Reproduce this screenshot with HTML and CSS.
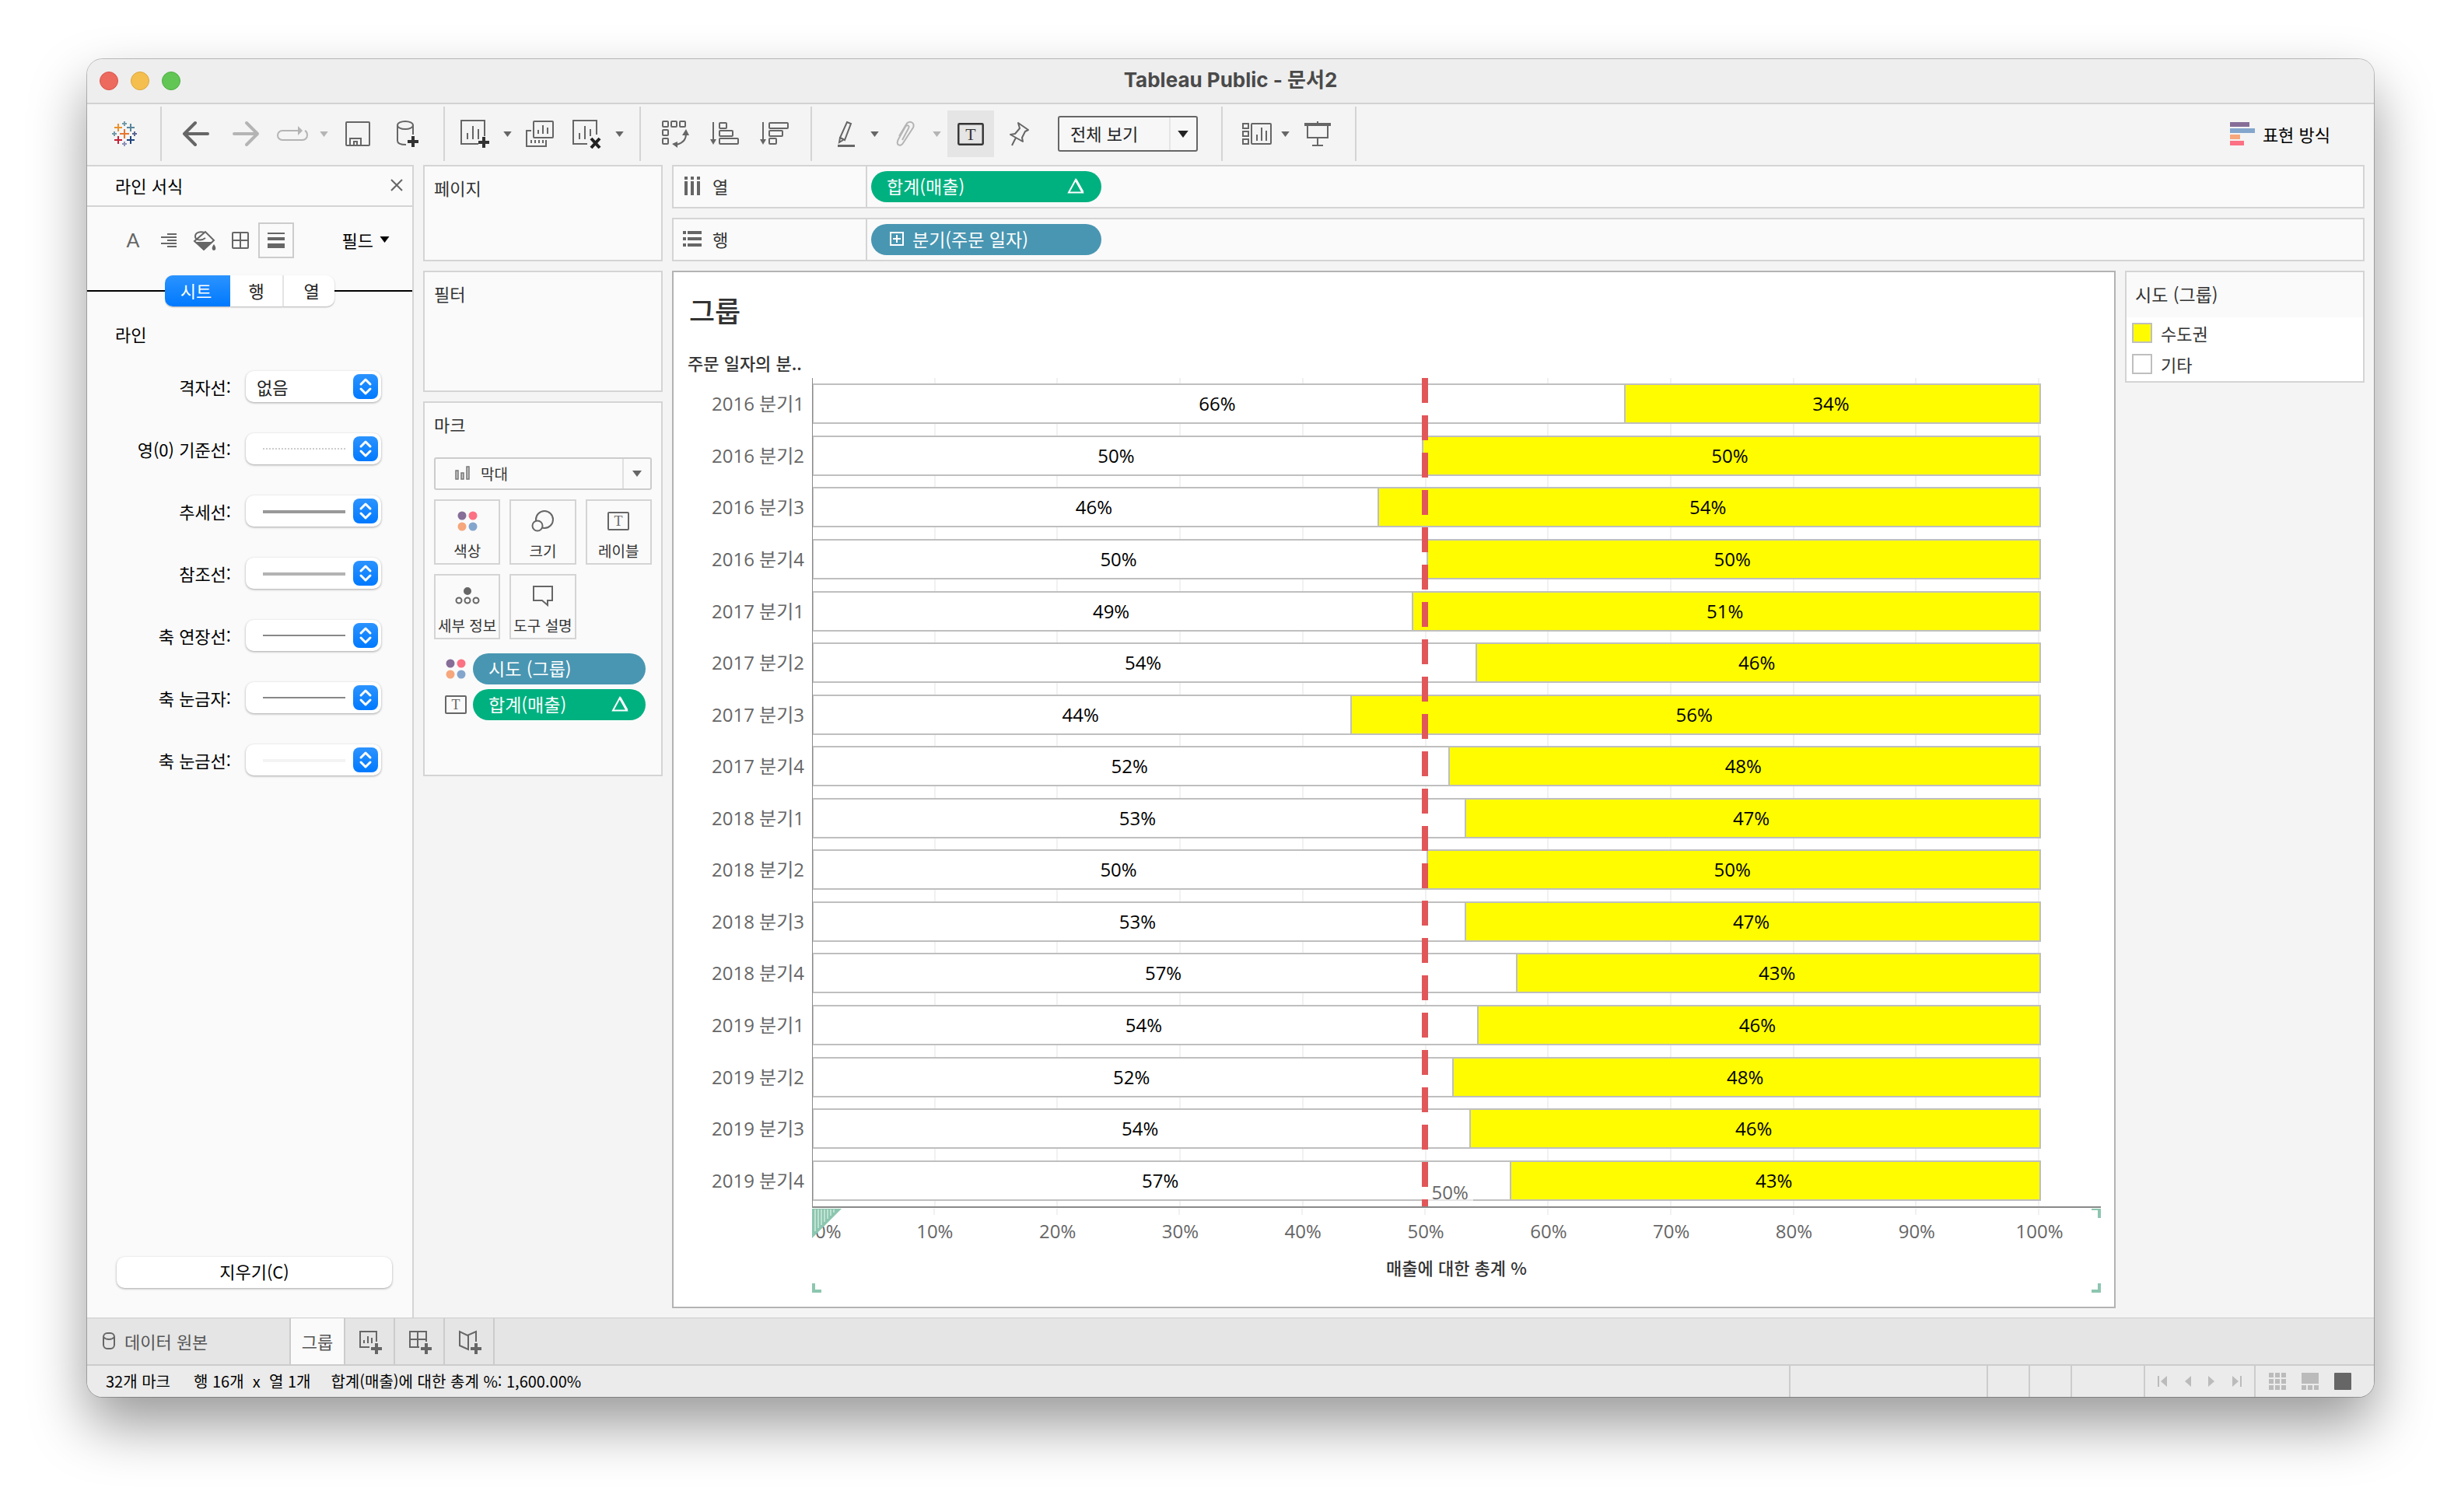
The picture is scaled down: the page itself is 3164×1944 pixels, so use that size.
FILE: index.html
```html
<!DOCTYPE html>
<html lang="ko">
<head>
<meta charset="utf-8">
<meta name="viewport" content="width=device-width, initial-scale=1">
<title>Tableau Public - 문서2</title>
<link rel="stylesheet" href="styles.css">
</head>
<body>
<svg class="sprite" aria-hidden="true">
  <symbol id="caret" viewBox="0 0 12 8"><path d="M0 0h12L6 8z" fill="currentColor"/></symbol>
  <symbol id="dots" viewBox="0 0 28 28"><circle cx="7" cy="7" r="5.5" fill="#866e98"/><circle cx="21" cy="7" r="5.5" fill="#fc7183"/><circle cx="7" cy="21" r="5.5" fill="#f6a77c"/><circle cx="21" cy="21" r="5.5" fill="#84a6cd"/></symbol>
  <symbol id="tbox" viewBox="0 0 28 24"><rect x="1" y="1" width="26" height="22" rx="1" fill="none" stroke="currentColor" stroke-width="2"/><text x="14" y="18" text-anchor="middle" font-family="Liberation Serif, serif" font-size="18" fill="currentColor">T</text></symbol>
  <symbol id="delta" viewBox="0 0 22 20"><path d="M2 18.500 11 2l9 16.500z" fill="none" stroke="#fff" stroke-width="2"/><path d="m11 2 9 16" stroke="#fff" stroke-width="3"/></symbol>
</svg>

<main class="window">
  <header class="titlebar">
    <div class="lights">
      <button class="light light--close" aria-label="닫기"></button>
      <button class="light light--min" aria-label="최소화"></button>
      <button class="light light--max" aria-label="확대"></button>
    </div>
    <h1 class="window-title">Tableau Public - 문서2</h1>
  </header>

  <nav class="toolbar">
    <div class="group group--logo">
      <button class="tool" aria-label="시작 페이지"><svg width="34" height="34" viewBox="0 0 34 34" fill="none" stroke-width="2">
        <path d="M17 11v12M11 17h12" stroke="#e8762d"/><path d="M9 4v10M4 9h10" stroke="#eb912b"/><path d="M25 4v10M20 9h10" stroke="#59879b"/><path d="M9 20v10M4 25h10" stroke="#c72037"/><path d="M25 20v10M20 25h10" stroke="#1f447d"/><path d="M17 1v6M14 4h6" stroke="#7199a6"/><path d="M17 27v6M14 30h6" stroke="#8d92b9"/><path d="M4 14v6M1 17h6" stroke="#7199a6"/><path d="M30 14v6M27 17h6" stroke="#5c6692"/></svg></button>
    </div>
    <div class="group group--file">
      <button class="tool" aria-label="실행 취소"><svg width="36" height="34" viewBox="0 0 36 34" fill="none" stroke="#666" stroke-width="4" stroke-linecap="round" stroke-linejoin="round"><path d="M33 17H3M17 3 3 17l14 14"/></svg></button>
      <button class="tool" aria-label="다시 실행"><svg width="36" height="34" viewBox="0 0 36 34" fill="none" stroke="#b4b4b4" stroke-width="4" stroke-linecap="round" stroke-linejoin="round"><path d="M3 17h30M19 3l14 14-14 14"/></svg></button>
      <button class="tool tool--56" aria-label="반복"><svg width="42" height="24" viewBox="0 0 42 24" fill="none" stroke="#b4b4b4" stroke-width="2"><path d="M28 8H8a6 6 0 0 0-6 6v0a6 6 0 0 0 6 6h26a6 6 0 0 0 6-6c0-3-1-5-3-6"/><path d="m28 2 6 6-6 6z" fill="#b4b4b4" stroke="none"/></svg></button>
      <button class="caret caret--off" aria-label="반복 메뉴"><svg width="11" height="7"><use href="#caret"/></svg></button>
      <button class="tool" aria-label="저장"><svg width="34" height="34" viewBox="0 0 34 34" fill="none" stroke="#666" stroke-width="2"><rect x="2" y="2" width="30" height="30" rx="1"/><path d="M7 32v-9h14v9M12 32v-5h4v5"/></svg></button>
      <button class="tool" aria-label="새 데이터 원본"><svg width="30" height="36" viewBox="0 0 30 36" fill="none" stroke="#666" stroke-width="2"><ellipse cx="12" cy="7" rx="10" ry="5"/><path d="M2 7v20c0 3 4 5 11 5M22 7v12"/><path d="M22 21v14M15 28h14" stroke="#333" stroke-width="4"/></svg></button>
    </div>
    <div class="group group--sheet">
      <button class="tool tool--60" aria-label="새 워크시트"><svg width="38" height="38" viewBox="0 0 38 38" fill="none" stroke="#666" stroke-width="2"><path d="M32 22V2H2v30h22M10 26v-8M17 26V9M24 26V13"/><path d="M31 23v14M24 30h14" stroke="#333" stroke-width="4"/></svg></button>
      <button class="caret" aria-label="새 워크시트 메뉴"><svg width="11" height="7"><use href="#caret"/></svg></button>
      <button class="tool tool--60" aria-label="복제"><svg width="38" height="38" viewBox="0 0 38 38" fill="none" stroke="#666" stroke-width="2"><rect x="11" y="3" width="25" height="21" rx="1"/><path d="M17 19v-5M23 19V8M29 19v-8M8 15H2v20h25v-8M8 31v-4M13 31v-4M18 31v-4M23 31v-4"/></svg></button>
      <button class="tool tool--60" aria-label="시트 지우기"><svg width="38" height="38" viewBox="0 0 38 38" fill="none" stroke="#666" stroke-width="2"><path d="M32 20V2H2v30h18M10 26v-8M17 26V9M24 22V13"/><path d="m25 25 11 12M36 25 25 37" stroke="#222" stroke-width="4"/></svg></button>
      <button class="caret" aria-label="지우기 메뉴"><svg width="11" height="7"><use href="#caret"/></svg></button>
    </div>
    <div class="group group--sort">
      <button class="tool" aria-label="행과 열 바꾸기"><svg width="36" height="36" viewBox="0 0 36 36" fill="none" stroke="#666" stroke-width="2"><rect x="2" y="2" width="7" height="7" rx="1"/><rect x="13" y="2" width="7" height="7" rx="1"/><rect x="24" y="2" width="7" height="7" rx="1"/><rect x="2" y="13" width="7" height="7" rx="1"/><rect x="2" y="24" width="7" height="7" rx="1"/><path d="M32 18c0 7-4 12-12 14"/><path d="m27 20 5-8 4 8zM21 28v8l-7-5z" fill="#666" stroke="none"/></svg></button>
      <button class="tool" aria-label="오름차순 정렬"><svg width="38" height="34" viewBox="0 0 38 34" fill="none" stroke="#666" stroke-width="2"><path d="M4 2v26"/><path d="M0 24h8l-4 7z" fill="#666" stroke="none"/><rect x="12" y="3" width="9" height="7" rx="1"/><rect x="12" y="13" width="17" height="7" rx="1"/><rect x="12" y="23" width="24" height="7" rx="1"/></svg></button>
      <button class="tool" aria-label="내림차순 정렬"><svg width="38" height="34" viewBox="0 0 38 34" fill="none" stroke="#666" stroke-width="2"><path d="M4 2v26"/><path d="M0 24h8l-4 7z" fill="#666" stroke="none"/><rect x="12" y="3" width="24" height="7" rx="1"/><rect x="12" y="13" width="17" height="7" rx="1"/><rect x="12" y="23" width="9" height="7" rx="1"/></svg></button>
    </div>
    <div class="group group--view">
      <button class="tool tool--52" aria-label="하이라이트"><svg width="26" height="36" viewBox="0 0 26 36" fill="none" stroke="#666" stroke-width="2"><path d="m14 3 5 2-8 21-6-3zM5 23l-1 6 5-3"/><path d="M2 33.500h22" stroke-width="3"/></svg></button>
      <button class="caret caret--tight" aria-label="하이라이트 메뉴"><svg width="11" height="7"><use href="#caret"/></svg></button>
      <button class="tool tool--60" aria-label="멤버 그룹화"><svg width="26" height="34" viewBox="0 0 26 34" fill="none" stroke="#b4b4b4" stroke-width="2"><path d="m9 25 8-15c2-4-2-5-4-2L4 24c-4 8 3 10 6 5L23 9c3-7-6-10-9-4L5 20"/></svg></button>
      <button class="caret caret--tight caret--off" aria-label="그룹 메뉴"><svg width="11" height="7"><use href="#caret"/></svg></button>
      <button class="tool tool--60 tool--on" aria-label="마크 레이블 표시" aria-pressed="true"><svg width="34" height="29"><use href="#tbox"/></svg></button>
      <button class="tool" aria-label="축 고정"><svg width="28" height="34" viewBox="0 0 28 34" fill="none" stroke="#666" stroke-width="2" stroke-linejoin="round"><path d="m13 3 13 9-4 2-4 8 1 5-16-9 6-1 6-7zM10 22 5 32"/></svg></button>
      <div class="fit">
        <select class="fit-select" aria-label="맞춤"><option>전체 보기</option></select>
        <svg class="fit-caret" width="14" height="9"><use href="#caret"/></svg>
      </div>
    </div>
    <div class="group group--cards">
      <button class="tool tool--52" aria-label="카드 표시"><svg width="40" height="32" viewBox="0 0 40 32" fill="none" stroke="#666" stroke-width="2"><rect x="2" y="3" width="7" height="6"/><rect x="2" y="13" width="7" height="6"/><rect x="2" y="23" width="7" height="6"/><rect x="13" y="3" width="25" height="26" rx="1"/><path d="M20 25v-8M26 25V8M32 25V12"/></svg></button>
      <button class="caret caret--tight" aria-label="카드 메뉴"><svg width="11" height="7"><use href="#caret"/></svg></button>
      <button class="tool" aria-label="프레젠테이션 모드"><svg width="36" height="34" viewBox="0 0 36 34" fill="none" stroke="#666" stroke-width="2"><path d="M18 1v4M5 6v16h26V6M18 22v9M11 32h14"/><path d="M1 5h34" stroke-width="4"/></svg></button>
    </div>
    <button class="show-me"><svg width="32" height="30" viewBox="0 0 32 30"><path d="M0 0h25v6H0z" fill="#866e98"/><path d="M0 8h32v6H0z" fill="#84a6cd"/><path d="M0 16h13v6H0z" fill="#f6a77c"/><path d="M0 24h18v6H0z" fill="#fc7183"/></svg>표현 방식</button>
  </nav>

  <div class="workspace">
    <aside class="format">
      <header class="format-head"><h2>라인 서식</h2><button class="close" aria-label="닫기"><svg width="16" height="16" viewBox="0 0 16 16" stroke="#666" stroke-width="2"><path d="m1 1 14 14M15 1 1 15"/></svg></button></header>
      <div class="format-tools">
        <button class="ftool" aria-label="글꼴"><svg width="30" height="36"><text x="15" y="27" text-anchor="middle" font-family="Lato, sans-serif" font-size="25" fill="#666">A</text></svg></button>
        <button class="ftool" aria-label="맞춤"><svg width="22" height="20" viewBox="0 0 22 20" stroke="#666" stroke-width="2"><path d="M9 2h12M1 6h20M9 10h12M1 14h20M9 18h12"/></svg></button>
        <button class="ftool" aria-label="음영"><svg width="30" height="28" viewBox="0 0 30 28" fill="none" stroke="#666" stroke-width="2"><path d="m2 15 14-12 11 11-13 12zM16 11c-5 4-13 3-13-2s6-7 12-5"/><path d="M3 16h23L14 27zM27 19c4 5 2 8 0 8s-4-3 0-8z" fill="#666" stroke="none"/></svg></button>
        <button class="ftool" aria-label="테두리"><svg width="24" height="24" viewBox="0 0 24 24" fill="none" stroke="#666" stroke-width="2"><rect x="2" y="2" width="20" height="20" rx="1"/><path d="M12 2v20M2 12h20"/></svg></button>
        <button class="ftool ftool--on" aria-label="라인"><svg width="22" height="22" viewBox="0 0 22 22" fill="#666"><path d="M0 1h22v2H0zM0 7h22v4H0zM0 15h22v6H0z"/></svg></button>
        <button class="fields">필드<svg width="13" height="8"><use href="#caret"/></svg></button>
      </div>
      <div class="scope">
        <div class="segments" role="radiogroup" aria-label="범위">
          <input type="radio" name="scope" id="s1" checked><label for="s1" class="segment segment--wide">시트</label>
          <input type="radio" name="scope" id="s2"><label for="s2" class="segment">행</label>
          <input type="radio" name="scope" id="s3"><label for="s3" class="segment">열</label>
        </div>
      </div>
      <h3 class="format-section">라인</h3>
      <form class="lines">
        <label for="l1">격자선:</label><select id="l1"><option>없음</option></select>
        <label for="l2">영(0) 기준선:</label><select id="l2" class="line line--dotted"><option aria-label="점선"></option></select>
        <label for="l3">추세선:</label><select id="l3" class="line line--trend"><option aria-label="실선"></option></select>
        <label for="l4">참조선:</label><select id="l4" class="line line--ref"><option aria-label="실선"></option></select>
        <label for="l5">축 연장선:</label><select id="l5" class="line line--thin"><option aria-label="실선"></option></select>
        <label for="l6">축 눈금자:</label><select id="l6" class="line line--thin"><option aria-label="실선"></option></select>
        <label for="l7">축 눈금선:</label><select id="l7" class="line line--faint"><option aria-label="실선"></option></select>
      </form>
      <button class="clear">지우기(C)</button>
    </aside>

    <section class="cards">
      <div class="card card--pages"><h2>페이지</h2></div>
      <div class="card card--filters"><h2>필터</h2></div>
      <div class="card card--marks">
        <h2>마크</h2>
        <div class="mark-type">
          <svg class="mark-bars" width="19" height="18" viewBox="0 0 19 18" fill="#ccc" stroke="#777" stroke-width="1.500"><rect x="1" y="6" width="3" height="11"/><rect x="8" y="9" width="3" height="8"/><rect x="15" y="1" width="3" height="16"/></svg>
          <select class="mark-select" aria-label="마크 유형"><option>막대</option></select>
          <svg class="mark-caret" width="14" height="8"><use href="#caret"/></svg>
        </div>
        <div class="mark-buttons">
          <button><svg width="28" height="28"><use href="#dots"/></svg>색상</button>
          <button><svg width="30" height="28" viewBox="0 0 30 28" fill="none" stroke="#666" stroke-width="2"><circle cx="17" cy="12" r="11"/><circle cx="8" cy="20" r="6.500" fill="#fafafa"/></svg>크기</button>
          <button><svg width="28" height="24"><use href="#tbox"/></svg>레이블</button>
          <button><svg width="32" height="22" viewBox="0 0 32 22" fill="none" stroke="#666" stroke-width="2"><circle cx="16" cy="5" r="4" fill="#666"/><circle cx="5" cy="17" r="3.500"/><circle cx="16" cy="17" r="3.500"/><circle cx="27" cy="17" r="3.500"/></svg>세부 정보</button>
          <button><svg width="28" height="28" viewBox="0 0 28 28" fill="none" stroke="#666" stroke-width="2"><path d="M2 2h24v18h-6v6l-7-6H2z"/></svg>도구 설명</button>
        </div>
        <ul class="mark-pills">
          <li><svg width="28" height="28"><use href="#dots"/></svg><button class="pill pill--blue">시도 (그룹)</button></li>
          <li><svg width="28" height="24"><use href="#tbox"/></svg><button class="pill pill--green">합계(매출)<svg width="22" height="20"><use href="#delta"/></svg></button></li>
        </ul>
      </div>
    </section>

    <section class="sheet">
      <div class="shelf">
        <h2><svg width="24" height="26" viewBox="0 0 24 26" fill="#666"><path d="M2 1h4v4H2zM10 1h4v4h-4zM18 1h4v4h-4zM2 7h4v18H2zM10 7h4v18h-4zM18 7h4v18h-4z"/></svg>열</h2>
        <div class="shelf-drop"><button class="pill pill--green">합계(매출)<svg width="22" height="20"><use href="#delta"/></svg></button></div>
      </div>
      <div class="shelf">
        <h2><svg width="24" height="20" viewBox="0 0 24 20" fill="#666"><path d="M0 0h4v4H0zM0 8h4v4H0zM0 16h4v4H0zM6 0h18v4H6zM6 8h18v4H6zM6 16h18v4H6z"/></svg>행</h2>
        <div class="shelf-drop"><button class="pill pill--blue"><svg class="expand" width="20" height="20" viewBox="0 0 20 20" fill="none" stroke="#fff" stroke-width="2"><rect x="2" y="2" width="16" height="16"/><path d="M10 5v10M5 10h10"/></svg>분기(주문 일자)</button></div>
      </div>

      <div class="stage">
        <article class="viz">
          <h2 class="viz-title">그룹</h2>
          <div class="row-header">주문 일자의 분..</div>
          <ol class="row-labels">
            <li>2016 분기1</li><li>2016 분기2</li><li>2016 분기3</li><li>2016 분기4</li>
            <li>2017 분기1</li><li>2017 분기2</li><li>2017 분기3</li><li>2017 분기4</li>
            <li>2018 분기1</li><li>2018 분기2</li><li>2018 분기3</li><li>2018 분기4</li>
            <li>2019 분기1</li><li>2019 분기2</li><li>2019 분기3</li><li>2019 분기4</li>
          </ol>
          <div class="plot">
            <div class="gridlines"><i></i><i></i><i></i><i></i><i></i><i></i><i></i><i></i><i></i><i></i></div>
            <div class="bar"><span style="width:66.1%">66%</span><b>34%</b></div>
            <div class="bar"><span style="width:49.6%">50%</span><b>50%</b></div>
            <div class="bar"><span style="width:46%">46%</span><b>54%</b></div>
            <div class="bar"><span style="width:50%">50%</span><b>50%</b></div>
            <div class="bar"><span style="width:48.8%">49%</span><b>51%</b></div>
            <div class="bar"><span style="width:54%">54%</span><b>46%</b></div>
            <div class="bar"><span style="width:43.8%">44%</span><b>56%</b></div>
            <div class="bar"><span style="width:51.8%">52%</span><b>48%</b></div>
            <div class="bar"><span style="width:53.1%">53%</span><b>47%</b></div>
            <div class="bar"><span style="width:50%">50%</span><b>50%</b></div>
            <div class="bar"><span style="width:53.1%">53%</span><b>47%</b></div>
            <div class="bar"><span style="width:57.3%">57%</span><b>43%</b></div>
            <div class="bar"><span style="width:54.1%">54%</span><b>46%</b></div>
            <div class="bar"><span style="width:52.1%">52%</span><b>48%</b></div>
            <div class="bar"><span style="width:53.5%">54%</span><b>46%</b></div>
            <div class="bar"><span style="width:56.8%">57%</span><b>43%</b></div>
            <div class="ref-line"></div>
            <div class="ref-label">50%</div>
          </div>
          <div class="axis">
            <div class="ticks"><i></i><i></i><i></i><i></i><i></i><i></i><i></i><i></i><i></i><i></i></div>
            <ol class="axis-labels"><li>0%</li><li>10%</li><li>20%</li><li>30%</li><li>40%</li><li>50%</li><li>60%</li><li>70%</li><li>80%</li><li>90%</li><li>100%</li></ol>
            <div class="axis-title">매출에 대한 총계 %</div>
            <svg class="grip" width="38" height="38" viewBox="0 0 38 38"><path d="M0 0h38L0 38z" fill="#8dc6b0"/><path d="M4 1v28M8 1v24M12 1v20M16 1v16M20 1v12M24 1v8M28 1v4" stroke="#bfe3d3" stroke-width="2"/></svg>
            <span class="corner corner--tr"></span><span class="corner corner--bl"></span><span class="corner corner--br"></span>
          </div>
        </article>
        <aside class="legend">
          <h2>시도 (그룹)</h2>
          <ul><li><span class="swatch swatch--yellow"></span>수도권</li><li><span class="swatch"></span>기타</li></ul>
        </aside>
      </div>
    </section>
  </div>

  <nav class="tabs">
    <button class="tab tab--source"><svg width="18" height="24" viewBox="0 0 18 24" fill="none" stroke="#666" stroke-width="2"><rect x="2" y="2" width="14" height="20" rx="5"/><path d="M2 7c3 4 11 4 14 0"/></svg>데이터 원본</button>
    <button class="tab tab--active">그룹</button>
    <button class="tab tab--new" aria-label="새 워크시트"><svg width="32" height="32" viewBox="0 0 32 32" fill="none" stroke="#666" stroke-width="2"><path d="M23 15V2H2v20h12M7 17v-4M12 17V8M17 17v-7"/><path d="M23 17v14M16 24h14" stroke-width="4"/></svg></button>
    <button class="tab tab--new" aria-label="새 대시보드"><svg width="32" height="32" viewBox="0 0 32 32" fill="none" stroke="#666" stroke-width="2"><path d="M23 15V2H2v20h12M12 2v20M2 12h21"/><path d="M23 17v14M16 24h14" stroke-width="4"/></svg></button>
    <button class="tab tab--new" aria-label="새 스토리"><svg width="32" height="32" viewBox="0 0 32 32" fill="none" stroke="#666" stroke-width="2"><path d="M23 15V2L12 7 2 2v18l11 5V7"/><path d="M23 17v14M16 24h14" stroke-width="4"/></svg></button>
  </nav>

  <footer class="status">
    <span class="status-marks">32개 마크</span><span class="status-size">행 16개&nbsp; x&nbsp; 열 1개</span><span class="status-sum">합계(매출)에 대한 총계 %: 1,600.00%</span>
    <span class="cell cell--254"></span><span class="cell cell--54"></span><span class="cell cell--54"></span><span class="cell cell--94"></span>
    <div class="cell pager">
      <button aria-label="처음"><svg width="12" height="14" viewBox="0 0 12 14"><path d="M0 0h2v14H0zM12 0v14L4 7z"/></svg></button>
      <button aria-label="이전"><svg width="8" height="14" viewBox="0 0 8 14"><path d="M8 0v14L0 7z"/></svg></button>
      <button aria-label="다음"><svg width="8" height="14" viewBox="0 0 8 14"><path d="M0 0v14l8-7z"/></svg></button>
      <button aria-label="마지막"><svg width="12" height="14" viewBox="0 0 12 14"><path d="M10 0h2v14h-2zM0 0v14l8-7z"/></svg></button>
    </div>
    <div class="cell modes">
      <button aria-label="시트 정렬기"><svg width="22" height="22" viewBox="0 0 22 22"><path d="M0 0h6v6H0zM8 0h6v6H8zM16 0h6v6h-6zM0 8h6v6H0zM8 8h6v6H8zM16 8h6v6h-6zM0 16h6v6H0zM8 16h6v6H8zM16 16h6v6h-6z"/></svg></button>
      <button aria-label="필름스트립"><svg width="22" height="22" viewBox="0 0 22 22"><path d="M0 0h22v14H0zM0 16h6v6H0zM8 16h6v6H8zM16 16h6v6h-6z"/></svg></button>
      <button class="mode--on" aria-label="탭"><svg width="22" height="22" viewBox="0 0 22 22"><rect width="22" height="22" rx="1"/></svg></button>
    </div>
  </footer>
</main>
</body>
</html>
```
FILE: styles.css
```css
* { box-sizing: border-box; }

body {
  margin: 0;
  min-height: 100vh;
  display: flex;
  padding: 76px 112px 148px;
  background: #fff;
  color: #333;
  font: 22px/32px "Noto Sans CJK KR", sans-serif;
}

h1, h2, h3, ol, ul { margin: 0; padding: 0; font: inherit; list-style: none; }
button, select { margin: 0; padding: 0; border: 0; background: none; color: inherit; font: inherit; }
select { appearance: none; }
svg { display: block; flex: none; }
.sprite { display: none; }

.window {
  flex: 1;
  min-width: 0;
  display: flex;
  flex-direction: column;
  overflow: hidden;
  border-radius: 20px;
  background: #f4f4f4;
  box-shadow: 0 0 0 1px rgba(0, 0, 0, .24), 0 36px 72px rgba(0, 0, 0, .4);
}

/* title bar */
.titlebar {
  display: grid;
  grid-template-columns: 1fr auto 1fr;
  align-items: center;
  height: 58px;
  padding: 0 16px;
  border-bottom: 2px solid #d2d2d2;
  background: #eee;
}
.lights { display: flex; gap: 16px; }
.light { width: 24px; height: 24px; border-radius: 50%; border: 1px solid; }
.light--close { background: #ed6a5f; border-color: #d95549; }
.light--min { background: #f5bf4f; border-color: #dba53a; }
.light--max { background: #62c655; border-color: #4dae40; }
.window-title { padding-bottom: 2px; font-family: Inter, "Noto Sans CJK KR", sans-serif; font-size: 26px; font-weight: 700; color: #4a4a4a; }

/* toolbar */
.toolbar { display: flex; align-items: center; height: 78px; padding: 0 56px 2px 0; }
.group { display: flex; align-items: center; height: 70px; border-right: 2px solid #d4d4d4; }
.group--logo { padding: 0 14px 0 16px; }
.group--file { padding: 0 14px 0 12px; }
.group--sheet { padding: 0 14px 0 8px; }
.group--sort { padding: 0 14px 0 12px; }
.group--view { padding: 0 30px 0 18px; }
.group--cards { padding: 0 16px 0 18px; }
.tool, .caret { display: flex; align-items: center; justify-content: center; width: 64px; height: 60px; color: #333; }
.tool--52 { width: 52px; }
.tool--56 { width: 56px; }
.tool--60 { width: 60px; }
.tool--on { margin-left: 4px; background: #e5e5e5; }
.caret { width: 24px; color: #666; }
.caret--tight { width: 20px; }
.caret--off { color: #b4b4b4; }
.fit { position: relative; margin-left: 18px; color: #222; }
.fit-select { display: block; width: 180px; height: 46px; padding: 0 0 2px 14px; border: 2px solid #666; border-radius: 3px; background: linear-gradient(#e5e5e5, #e5e5e5) 141px 0 / 2px 100% no-repeat #f7f7f7; }
.fit-caret { position: absolute; right: 12px; top: 19px; pointer-events: none; }
.show-me { display: flex; align-items: center; gap: 10px; margin-left: auto; color: #000; }

/* workspace */
.workspace { flex: 1; display: flex; gap: 12px; padding-right: 12px; }

/* format pane */
.format {
  flex: none;
  width: 420px;
  display: flex;
  flex-direction: column;
  border: solid #d4d4d4;
  border-width: 2px 2px 0 0;
  background: #fafafa;
  color: #000;
}
.format-head { display: flex; align-items: center; justify-content: space-between; height: 52px; padding: 0 12px 2px 36px; border-bottom: 2px solid #d4d4d4; }
.format-tools { display: flex; align-items: center; height: 86px; padding: 0 29px 0 36px; }
.ftool { display: flex; align-items: center; justify-content: center; width: 46px; height: 46px; }
.ftool--on { border: 2px solid #ccc; }
.fields { display: flex; align-items: center; gap: 8px; margin-left: auto; padding-bottom: 2px; }
.scope { display: flex; align-items: center; }
.scope::before, .scope::after { content: ""; flex: 1; height: 2px; background: #000; }
.segments { display: flex; height: 44px; padding: 2px 0; }
.segments input { position: absolute; opacity: 0; pointer-events: none; }
.segment { width: 67px; text-align: center; line-height: 38px; background: #fff; color: #222; box-shadow: 0 1px 2px rgba(0, 0, 0, .3); clip-path: inset(-2px 0 -4px 0); }
.segment--wide { width: 84px; padding-right: 4px; border-radius: 10px 0 0 10px; }
.segment:last-child { padding-left: 6px; border-left: 2px solid #e4e4e4; border-radius: 0 10px 10px 0; clip-path: none; }
input:checked + .segment { background: linear-gradient(#2b93ff, #0079ff); color: #fff; }
.format-section { margin-top: 11px; padding: 4px 36px; line-height: 36px; }
.lines { display: grid; grid-template-columns: 185px 174px; column-gap: 19px; row-gap: 40px; margin-top: 26px; }
.lines label { text-align: right; line-height: 40px; }
.lines select {
  height: 40px;
  padding-left: 14px;
  border-radius: 10px;
  color: #222;
  box-shadow: 0 1px 3px rgba(0, 0, 0, .35);
  background-color: #fff;
  background-image: url("data:image/svg+xml,%3Csvg xmlns='http://www.w3.org/2000/svg' width='32' height='32'%3E%3ClinearGradient id='g' x2='0' y2='1'%3E%3Cstop stop-color='%232b93ff'/%3E%3Cstop offset='1' stop-color='%230079ff'/%3E%3C/linearGradient%3E%3Crect width='32' height='32' rx='8' fill='url(%23g)'/%3E%3Cpath d='m10 13 6-6 6 6M10 19l6 6 6-6' fill='none' stroke='white' stroke-width='3' stroke-linecap='round' stroke-linejoin='round'/%3E%3C/svg%3E"), var(--stroke, none);
  background-position: 138px 4px, 22px 19px;
  background-size: 32px 32px, 106px var(--weight, 4px);
  background-repeat: no-repeat;
}
.line--dotted { --stroke: repeating-linear-gradient(90deg, #ccc 0 2px, #fff 2px 4px); --weight: 2px; }
.line--trend { --stroke: linear-gradient(#999, #999); }
.line--ref { --stroke: linear-gradient(#b3b3b3, #b3b3b3); }
.line--thin { --stroke: linear-gradient(#888, #888); --weight: 2px; }
.line--faint { --stroke: linear-gradient(#f3f3f3, #f3f3f3); }
.clear { height: 40px; margin: auto 26px 38px 38px; padding-bottom: 4px; border-radius: 10px; background: #fff; box-shadow: 0 1px 3px rgba(0, 0, 0, .35); }

/* shelf cards */
.cards { flex: none; width: 308px; display: flex; flex-direction: column; gap: 12px; }
.card { padding: 10px 12px 12px; border: 2px solid #d4d4d4; background: #fafafa; }
.card h2 { line-height: 34px; }
.card--pages { height: 124px; }
.card--filters { height: 156px; }
.card--marks { padding-bottom: 70px; }
.mark-type { position: relative; margin: 26px 0 12px; font-size: 19px; }
.mark-select { display: block; width: 100%; height: 42px; padding-left: 58px; border: 2px solid #ccc; border-radius: 3px; background: linear-gradient(#e0e0e0, #e0e0e0) right 34px top 0 / 2px 100% no-repeat; }
.mark-bars { position: absolute; left: 27px; top: 11px; pointer-events: none; }
.mark-caret { position: absolute; right: 12px; top: 17px; color: #666; pointer-events: none; }
.mark-buttons { display: grid; grid-template-columns: repeat(3, 1fr); gap: 12px; font-size: 19px; }
.mark-buttons button { display: grid; grid-template-rows: 52px 24px; align-content: start; place-items: center; height: 84px; border: 2px solid #d4d4d4; line-height: 20px; white-space: nowrap; color: #333; }
.mark-buttons svg { color: #666; }
.mark-pills { display: grid; gap: 6px; padding: 18px 8px 0 14px; color: #666; }
.mark-pills li { display: flex; align-items: center; gap: 8px; }
.pill { display: flex; align-items: center; justify-content: space-between; flex: 1; height: 40px; padding: 0 22px 2px 20px; border-radius: 20px; color: #fff; font-size: 23px; line-height: 32px; white-space: nowrap; }
.pill--blue { background: #4996b2; }
.pill--green { background: #00b180; }

/* column and row shelves */
.sheet { flex: 1; min-width: 0; display: flex; flex-direction: column; gap: 12px; padding-bottom: 12px; }
.shelf { display: flex; height: 56px; border: 2px solid #d4d4d4; background: #fafafa; }
.shelf h2 { display: flex; align-items: center; gap: 14px; width: 249px; padding: 0 0 2px 12px; border-right: 2px solid #d4d4d4; }
.shelf-drop { display: flex; align-items: center; padding-left: 5px; }
.shelf .pill { flex: none; width: 296px; }
.shelf .pill--blue { justify-content: flex-start; gap: 10px; padding-left: 23px; }

/* view */
.stage { flex: 1; display: flex; align-items: flex-start; gap: 12px; }
.viz {
  flex: 1;
  align-self: stretch;
  min-width: 0;
  display: grid;
  grid-template-columns: 178px 1fr;
  grid-template-rows: 96px 40px 1fr 129px;
  padding-right: 17px;
  border: 2px solid #b3b3b3;
  background: #fff;
}
.viz-title { grid-column: 1 / -1; padding-left: 20px; font-size: 36px; font-weight: 500; line-height: 96px; }
.row-header { grid-column: 1 / -1; padding: 4px 0 0 18px; font-weight: 500; line-height: 32px; }
.row-labels, .plot, .axis-labels, .ref-label { font-family: "Open Sans", "Noto Sans CJK KR", sans-serif; font-size: 24px; color: #666; }
.row-labels { display: grid; grid-auto-rows: 1fr; align-items: center; padding-right: 10px; text-align: right; white-space: nowrap; }
.plot { position: relative; display: grid; grid-auto-rows: 1fr; align-items: center; border-left: 1px solid #898989; }
.gridlines, .ticks { position: absolute; inset: 0 calc(100% / 21) 0 0; display: flex; }
.gridlines i, .ticks i { flex: 1; border-right: 2px solid #f1f1f1; }
.bar { position: relative; display: flex; height: 52px; margin-right: calc(100% / 21 - 2px); border: 2px solid #bfbfbf; border-left-width: 1px; background: #fff; color: #000; text-align: center; line-height: 48px; }
.bar span, .bar b { padding-right: 4px; }
.bar b { flex: 1; border-left: 2px solid #bfbfbf; background: #fffc00; font-weight: 400; }
.ref-line { position: absolute; top: 0; bottom: 0; left: calc(100% * 10 / 21 - 6px); width: 8px; background: repeating-linear-gradient(#e15759 0 32px, transparent 32px 48px); }
.ref-label { position: absolute; bottom: 4px; left: calc(100% * 10 / 21 + 2px); padding: 0 6px 0 5px; background: rgba(255, 255, 255, .6); line-height: 28px; }
.axis { position: relative; grid-column: 2; border-top: 2px solid #898989; }
.ticks { top: 1px; bottom: auto; height: 8px; }
.axis-labels { display: flex; padding-top: 14px; }
.axis-labels li { flex: 2; min-width: 0; text-align: center; }
.axis-labels li:first-child { flex: 1; text-align: left; text-indent: 4px; }
.axis-title { margin-top: 14px; text-align: center; font-weight: 500; }
.grip { position: absolute; left: 0; top: 1px; }
.corner { position: absolute; width: 12px; height: 12px; border: 0 solid #8dc6b0; }
.corner--tr { top: 1px; right: 0; border-width: 2px 4px 0 0; }
.corner--bl { bottom: 18px; left: 0; border-width: 0 0 4px 4px; }
.corner--br { bottom: 18px; right: 0; border-width: 0 4px 4px 0; }

/* legend */
.legend { flex: none; width: 308px; height: 144px; border: 2px solid #d4d4d4; background: #fff; }
.legend h2 { padding: 0 0 2px 11px; background: #fafafa; font-size: 23px; line-height: 56px; }
.legend ul { padding: 0 0 0 7px; }
.legend li { display: flex; align-items: center; gap: 11px; height: 40px; }
.swatch { width: 26px; height: 26px; border: 2px solid #bfbfbf; }
.swatch--yellow { background: #fffc00; }

/* sheet tabs */
.tabs { display: flex; height: 62px; border: solid #ccc; border-width: 1px 0 2px; background: #e5e5e5; }
.tab { display: flex; align-items: center; padding-bottom: 2px; border-right: 2px solid #ccc; color: #555; }
.tab--source { width: 262px; padding-left: 19px; gap: 11px; }
.tab--active { width: 70px; justify-content: center; background: #fafafa; }
.tab--new { width: 64px; padding: 2px 0 0 3px; justify-content: center; }

/* status bar */
.status { display: flex; align-items: center; height: 40px; padding-left: 24px; background: #ebebeb; color: #000; font-size: 20px; white-space: nowrap; }
.status-marks { margin-right: 30px; }
.status-size { margin-right: 26px; }
.status-sum { margin-right: auto; }
.cell { height: 40px; border-left: 2px solid #ccc; }
.cell--254 { width: 254px; }
.cell--54 { width: 54px; }
.cell--94 { width: 94px; }
.pager { display: flex; align-items: center; justify-content: space-between; width: 142px; padding: 0 16px; fill: #bbb; }
.modes { display: flex; align-items: center; gap: 20px; width: 154px; padding-left: 17px; fill: #bbb; }
.mode--on { fill: #666; }
```
